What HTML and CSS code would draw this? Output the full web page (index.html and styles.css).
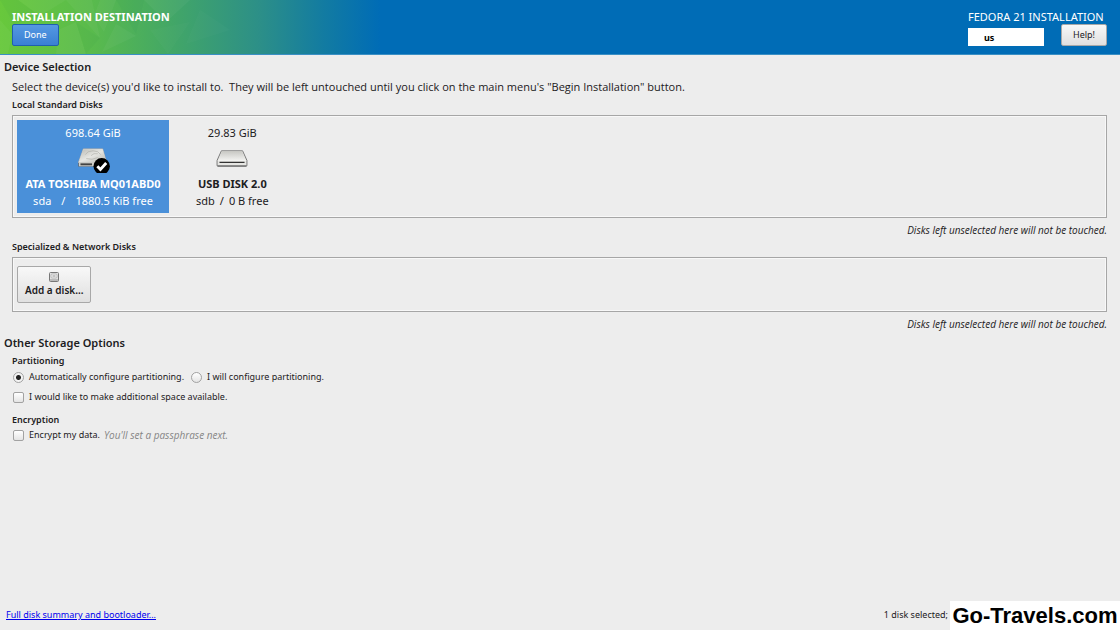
FILE: index.html
```html
<!DOCTYPE html>
<html lang="en">
<head>
    <meta charset="utf-8">
    <meta name="viewport" content="width=device-width, initial-scale=1">
    <title>Installation Destination</title>
    <link rel="stylesheet" href="styles.css">
</head>
<body>

<header class="topbar">
    <svg class="facets" viewBox="0 0 400 54" preserveAspectRatio="xMinYMin slice" aria-hidden="true">
        <g fill="#fff">
            <path opacity=".04" d="M18 0h48L40 16zM66 0l34 38-8-38zM100 0l-6 16 10 16 12-32z"/>
            <path opacity=".04" d="M0 20l12 14-4 20H0zM58 30l18-8 10 32H56zM116 24l20 12-34 16zM144 0l22 22 24-22z"/>
            <path opacity=".02" d="M150 30l40-8-22 32zM200 10l30 20-44 14z"/>
        </g>
        <g fill="#064">
            <path opacity=".04" d="M0 0h18l22 16-26 8zM76 22l24 16-14 16zM116 0h28l-8 34z"/>
        </g>
    </svg>
    <div class="topbar-side">
        <h1>INSTALLATION DESTINATION</h1>
        <button type="button" class="btn btn-done">Done</button>
    </div>
    <div class="topbar-side topbar-right">
        <span class="product">FEDORA 21 INSTALLATION</span>
        <div class="topbar-controls">
            <input type="text" class="keyboard" value="us" aria-label="Keyboard layout">
            <button type="button" class="btn">Help!</button>
        </div>
    </div>
</header>

<main>
    <section>
        <h2>Device Selection</h2>
        <div class="indent">
            <p class="intro">Select the device(s) you'd like to install to.&nbsp; They will be left untouched until you click on the main menu's "Begin Installation" button.</p>

            <h3>Local Standard Disks</h3>
            <div class="disk-box local">
                <button type="button" class="disk selected" aria-pressed="true">
                    <span>698.64 GiB</span>
                    <svg class="disk-icon" viewBox="0 0 34 28" aria-hidden="true">
                        <defs>
                            <linearGradient id="metal" x1="0" y1="0" x2="1" y2="1">
                                <stop offset="0" stop-color="#b9b9b3"/>
                                <stop offset=".5" stop-color="#e6e6e2"/>
                                <stop offset="1" stop-color="#b4b4ae"/>
                            </linearGradient>
                        </defs>
                        <path d="M7 3h20l4 14v4H2v-4z" fill="#777" stroke="#666" stroke-width=".6"/>
                        <path d="M7 3h20l4 14H2z" fill="url(#metal)" stroke="#e4e4e0" stroke-width=".6"/>
                        <path d="M2.500 17h28v4h-28z" fill="#cfcfca"/>
                        <path d="M4 19h12" stroke="#444" stroke-width="2"/>
                        <path d="M9 9q2-4 8-4t8 4M10 13q6 2 12-1M15 10l3-2h4" fill="none" stroke="#b0b0aa" stroke-width=".7"/>
                        <circle cx="26" cy="21" r="8.500" fill="#000"/>
                        <path d="M21.500 21l3.200 3.300 6-6.600" fill="none" stroke="#fff" stroke-width="3"/>
                    </svg>
                    <strong>ATA TOSHIBA MQ01ABD0</strong>
                    <span class="disk-detail wide"><span>sda</span><span>/</span><span>1880.5 KiB free</span></span>
                </button>
                <button type="button" class="disk" aria-pressed="false">
                    <span>29.83 GiB</span>
                    <svg class="disk-icon" viewBox="0 0 34 28" aria-hidden="true">
                        <defs>
                            <linearGradient id="usb" x1="0" y1="0" x2="0" y2="1">
                                <stop offset="0" stop-color="#c8c8c4"/>
                                <stop offset="1" stop-color="#f4f4f2"/>
                            </linearGradient>
                        </defs>
                        <path d="M6 5h22l4.500 10v5.500h-31v-5.500z" fill="#e6e6e3" stroke="#777" stroke-width="1"/>
                        <path d="M6.500 5.500h21l4 10h-29z" fill="url(#usb)"/>
                        <path d="M4 17h26" stroke="#333" stroke-width="1.300"/>
                        <path d="M2 21h30" stroke="#666" stroke-width="1"/>
                    </svg>
                    <strong>USB DISK 2.0</strong>
                    <span class="disk-detail"><span>sdb</span><span>/</span><span>0 B free</span></span>
                </button>
            </div>
            <p class="note">Disks left unselected here will not be touched.</p>

            <h3>Specialized &amp; Network Disks</h3>
            <div class="disk-box network">
                <button type="button" class="btn btn-add">
                    <svg class="add-icon" viewBox="0 0 12 12" aria-hidden="true">
                        <rect x="1.500" y="1.500" width="9" height="9" rx="1" fill="#e4e4e4" stroke="#777"/>
                        <rect x="3" y="3" width="6" height="4" rx="1" fill="#f2f2f2" stroke="#aaa" stroke-width=".8"/>
                        <path d="M4.500 5h3M2 9h8" stroke="#888" stroke-width=".9"/>
                    </svg>
                    <strong>Add a disk...</strong>
                </button>
            </div>
            <p class="note">Disks left unselected here will not be touched.</p>
        </div>
    </section>

    <section class="options">
        <h2>Other Storage Options</h2>
        <div class="indent">
            <h3>Partitioning</h3>
            <div class="row">
                <label><input type="radio" name="partitioning" checked>Automatically configure partitioning.</label>
                <label><input type="radio" name="partitioning">I will configure partitioning.</label>
            </div>
            <div class="row">
                <label><input type="checkbox">I would like to make additional space available.</label>
            </div>
            <h3 class="encryption">Encryption</h3>
            <div class="row last">
                <label><input type="checkbox">Encrypt my data.</label>
                <em class="hint">You'll set a passphrase next.</em>
            </div>
        </div>
    </section>
</main>

<footer>
    <a href="#">Full disk summary and bootloader...</a>
    <span class="status">1 disk selected;</span>
</footer>
<div class="watermark">Go-Travels.com</div>

</body>
</html>
```
FILE: styles.css
```css
* {
    box-sizing: border-box;
}

body {
    margin: 0;
    min-height: 100vh;
    display: flex;
    flex-direction: column;
    background-color: #ededed;
    color: #1c2022;
    font-family: "Noto Sans", "Open Sans", sans-serif;
    font-size: 9px;
    line-height: 12px;
}

h1, h2, h3, p {
    margin: 0;
}

button, input {
    font: inherit;
    color: inherit;
}

/* header */
.topbar {
    position: relative;
    display: flex;
    justify-content: space-between;
    height: 55px;
    padding: 9px 13px 0 12px;
    background: linear-gradient(to right, #68c83c 0, #5abb4c 90px, #43a766 170px, #2c8f88 260px, #127ba2 325px, #006cb6 380px);
    border-bottom: 1px solid #3a8fc4;
    color: #fff;
}

.facets {
    position: absolute;
    left: 0;
    top: 0;
    width: 400px;
    height: 54px;
}

.topbar-side {
    position: relative;
    display: flex;
    flex-direction: column;
    align-items: flex-start;
}

.topbar-right {
    align-items: stretch;
    min-width: 139px;
}

h1, .product {
    font-size: 11px;
    line-height: 15px;
}

h1 {
    font-weight: 700;
}

.topbar-controls {
    display: flex;
    justify-content: space-between;
    align-items: flex-start;
}

.btn {
    height: 22px;
    padding: 0 11px;
    border: 1px solid #a8a8a8;
    border-radius: 2px;
    background: linear-gradient(#f8f8f8, #e0e0e0);
    color: #1c2022;
}

.btn-done {
    border-color: #1f5fae;
    background: linear-gradient(#5598e2, #3a80d4);
    color: #fff;
}

.keyboard {
    width: 76px;
    height: 18px;
    margin-top: 4px;
    padding: 0 16px;
    border: none;
    background-color: #fff;
    color: #000;
    font-weight: bold;
}

/* content */
main {
    flex: 1;
    padding: 4px 13px 0 4px;
}

h2 {
    font-size: 11px;
    line-height: 16px;
    font-weight: 600;
}

h3 {
    font-size: 9px;
    line-height: 12px;
    font-weight: 600;
}

.indent {
    padding-left: 8px;
}

.intro {
    font-family: "Open Sans", "Noto Sans", sans-serif;
    font-size: 11px;
    line-height: 16px;
    margin: 4px 0;
}

.disk-box {
    display: flex;
    align-items: flex-start;
    margin: 4px 0 6px;
    padding: 4px;
    border: 1px solid #a6a6a6;
    box-shadow: inset 0 0 0 1px #f8f8f8;
}

.local {
    gap: 22px;
    min-height: 103px;
}

.network {
    min-height: 55px;
    padding-top: 8px;
}

.disk {
    display: flex;
    flex-direction: column;
    align-items: center;
    height: 93px;
    padding: 4px 5px;
    border: none;
    background: none;
    font-size: 11px;
    line-height: 17px;
}

.disk strong {
    font-weight: 700;
}

.btn-add strong {
    font-weight: 600;
}

.selected {
    min-width: 152px;
    background-color: #4a90d9;
    color: #fff;
}

.disk-icon {
    width: 34px;
    height: 28px;
    margin: 5px 0 2px;
}

.disk-detail {
    display: flex;
    gap: 5px;
}

.wide {
    gap: 10px;
}

.btn-add {
    display: flex;
    flex-direction: column;
    align-items: center;
    height: 37px;
    padding: 4px 7px;
    font-size: 10px;
    line-height: 14px;
}

.add-icon {
    width: 12px;
    height: 12px;
}

.note, .hint {
    font-family: "Open Sans", "Noto Sans", sans-serif;
    font-size: 10px;
    font-style: italic;
}

.note {
    text-align: right;
    margin-bottom: 5px;
}

/* storage options */
.options h2 {
    margin: 4px 0;
}

.row {
    display: flex;
    align-items: center;
    gap: 6px;
    height: 20px;
}

.row label {
    display: flex;
    align-items: center;
    gap: 4px;
}

.row input {
    appearance: none;
    width: 11px;
    height: 11px;
    margin: 0 1px;
    border: 1px solid #a2a2a2;
    border-radius: 2px;
    background: linear-gradient(#fff, #e4e4e4);
}

.row input[type="radio"] {
    border-radius: 50%;
}

.row input[type="radio"]:checked {
    background: radial-gradient(circle, #222 0, #222 2px, #f4f4f4 3px);
}

.encryption {
    margin-top: 7px;
}

.last {
    gap: 4px;
    height: 18px;
}

.hint {
    color: #858585;
}

/* footer */
footer {
    display: flex;
    justify-content: space-between;
    padding: 0 172px 9px 6px;
}

footer a {
    color: #0000ee;
}

.watermark {
    position: absolute;
    right: 0;
    bottom: 0;
    width: 170px;
    height: 29px;
    background-color: #fff;
    color: #000;
    font-family: "Liberation Sans", Arial, sans-serif;
    font-size: 22px;
    font-weight: bold;
    line-height: 30px;
    text-align: center;
    white-space: nowrap;
}
```
